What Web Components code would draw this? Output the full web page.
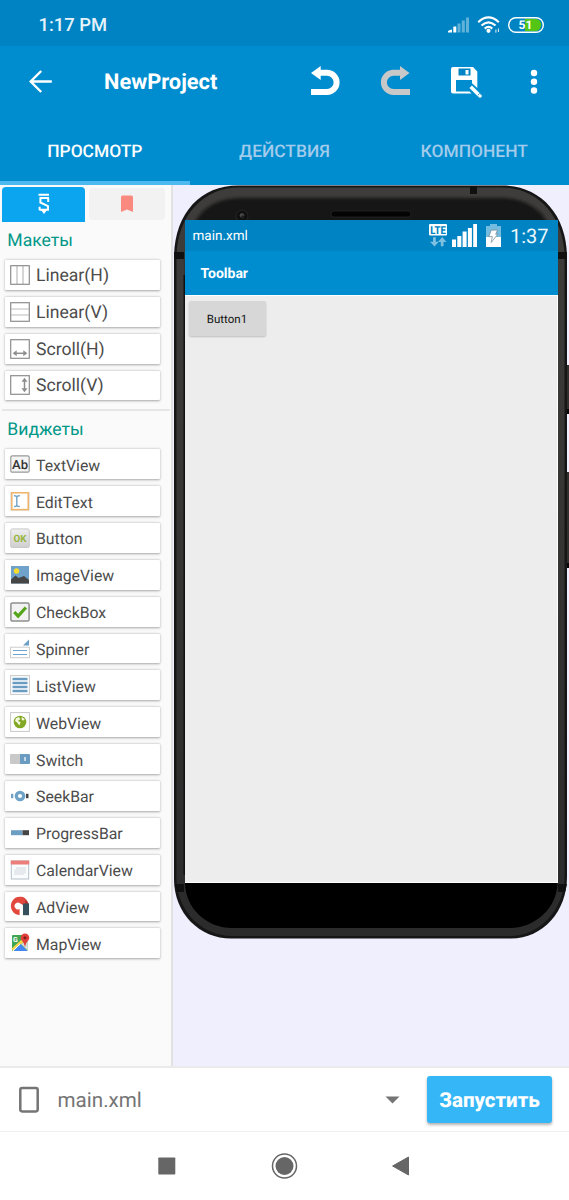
<!DOCTYPE html>
<html lang="ru">
<head>
<meta charset="utf-8">
<title>NewProject</title>
<style>
  body {
    margin: 0;
    font-family: Roboto, sans-serif;
    text-rendering: geometricPrecision;
    background: #fff;
  }
</style>
</head>
<body>
<editor-screen></editor-screen>

<script>
const ICONS = {
  // status bar
  signal: [22, 16, `<path d="M0 15.500v-1.500q2-1.500 4-1.500v3z" fill="#fff"/><rect x="5.300" y="9.500" width="3" height="6" fill="#fff"/><g fill="#fff" opacity=".38"><rect x="9.500" y="6.500" width="3" height="9"/><rect x="13.800" y="3.500" width="3" height="12"/><rect x="18" y="0.500" width="3" height="15"/></g>`],
  wifi: [24, 18, `<g fill="none" stroke="#fff" stroke-width="2.100"><path d="M.2 6.200Q10.500 -3.300 20.800 6.200"/><path d="M3.500 9.600Q10.500 3 17.500 9.600"/><path d="M6.700 12.600Q10.500 9.300 14.300 12.600"/></g><circle cx="10.500" cy="14.800" r="2.100" fill="#fff"/><path d="M17.900 13.500v3.200M20.400 12.500v3.500" stroke="#fff" stroke-width=".9"/>`],
  battery: [38, 18, `<path d="M18 2.800h10a5.700 5.700 0 0 1 0 12.400H18z" fill="#54c515"/><rect x="1.700" y="1.700" width="34.600" height="14.600" rx="7.300" fill="none" stroke="#fff" stroke-width="1.400"/><text x="18.500" y="13.300" font-size="12" font-weight="700" text-anchor="middle" fill="#fff">51</text>`],
  // app bar
  back: [24, 24, `<path d="M23.800 11.500H3.500M13.200 1 2.700 11.500l10.500 10.500" fill="none" stroke="#fff" stroke-width="2.400"/>`],
  undo: [32, 32, `<path d="M2 7 11.700 0v3.800H18a12.600 12.600 0 0 1 0 25.200H2v-6h16a6.500 6.500 0 0 0 0-13.200h-6.300V14z" fill="#fff"/>`],
  redo: [32, 32, `<path d="M30.500 7 21 0v3.800H14.500a12.600 12.600 0 0 0 0 25.200H31v-6H14.500a6.500 6.500 0 0 1 0-13.200H21V14z" fill="#c8c8c8"/>`],
  save: [34, 32, `<path d="M4 1h20l4.300 4.500v16.500L23 17.300V14H7v11.500h13.500l2 2H4q-2 0-2-2V3q0-2 2-2z" fill="#fff"/><path d="M9.500 2.500h12V9.500h-12z" fill="#0084c3"/><rect x="16.500" y="4" width="3" height="4.500" fill="#fff"/><path d="M21.700 20.700 30.200 29.200" stroke="#fff" stroke-width="3.500"/><circle cx="31" cy="30" r="1.800" fill="#fff"/><path d="m28.700 29.300 2-2" stroke="#008ecf" stroke-width=".8"/>`],
  more: [12, 26, `<g fill="#fff"><circle cx="6" cy="4" r="3.200"/><circle cx="6" cy="12.700" r="3.200"/><circle cx="6" cy="21.500" r="3.200"/></g>`],
  // palette tabs
  brand: [14, 22, `<g fill="none" stroke="#fff" stroke-width="2"><path d="M1.500 1.700h10.500M12 5H3.400v4.500l7.600 3.700v3.600H2.300M2.600 13.700v3.200M11.200 5v4"/></g><path d="M3.800 16.800h6.400L7 21z" fill="#fff"/>`],
  bookmark: [12, 18, `<path d="M0 2q0-1.500 1.500-1.500h9q1.500 0 1.500 1.500v15l-6-2.600-6 2.600z" fill="#fa8a80"/>`],
  // layouts
  linearH: [20, 20, `<path d="M7 1v18M13 1v18" stroke="#bbb" stroke-width="1.200"/><rect x=".7" y=".7" width="18.600" height="18.600" fill="none" stroke="#8d8d8d" stroke-width="1.200"/>`],
  linearV: [20, 20, `<path d="M1 7h18M1 13h18" stroke="#bbb" stroke-width="1.200"/><rect x=".7" y=".7" width="18.600" height="18.600" fill="none" stroke="#8d8d8d" stroke-width="1.200"/>`],
  scrollH: [20, 20, `<rect x=".7" y=".7" width="18.600" height="18.600" fill="none" stroke="#8d8d8d" stroke-width="1.200"/><path d="M5 14.300h10" stroke="#8d8d8d" stroke-width="1.500"/><path d="M6.700 11.300 2.700 14.300l4 3zM13.300 11.300l4 3-4 3z" fill="#8d8d8d"/>`],
  scrollV: [20, 20, `<rect x=".7" y=".7" width="18.600" height="18.600" fill="none" stroke="#8d8d8d" stroke-width="1.200"/><path d="M14.500 5v10" stroke="#8d8d8d" stroke-width="1.500"/><path d="m11.500 6.700 3-4 3 4zM11.500 13.300l3 4 3-4z" fill="#8d8d8d"/>`],
  // widgets
  text: [20, 20, `<rect x=".8" y="1.800" width="18.400" height="16.400" rx="1.500" fill="#f4f4f4" stroke="#999" stroke-width="1.200"/><text x="10" y="14.500" font-size="12.500" font-weight="500" text-anchor="middle" fill="#333" textLength="16" lengthAdjust="spacingAndGlyphs">Ab</text>`],
  edit: [20, 20, `<rect x=".5" y="1" width="19" height="18.500" fill="#ccc"/><rect x="1.800" y="1.800" width="16.400" height="16.800" fill="#fff" stroke="#f0b469" stroke-width="1.500"/><path d="M4 4.800q2.800-.3 2.800 1.500v7.500q0 1.900-2.800 1.600M9.800 4.800q-3-.3-3 1.500M6.800 13.800q0 1.900 3 1.600" fill="none" stroke="#70a3c7" stroke-width="1.400"/>`],
  ok: [20, 20, `<defs><linearGradient id="g" x2="0" y2="1"><stop stop-color="#eee"/><stop offset="1" stop-color="#cfcfcf"/></linearGradient></defs><rect x=".7" y=".9" width="18.600" height="18.600" rx="1.500" fill="url(#g)" stroke="#c9c9c9"/><text x="10" y="13.600" font-size="10" font-weight="700" text-anchor="middle" fill="#98b63c" textLength="13" lengthAdjust="spacingAndGlyphs">OK</text>`],
  image: [20, 20, `<rect x="1" y="1" width="18" height="17.500" fill="#6fa3cb"/><circle cx="6.500" cy="6" r="2.700" fill="#f9dc2c"/><path d="M1 14.500 5.500 10.500 8.500 13 14 11 19 15v3.500H1z" fill="#464646"/>`],
  check: [20, 20, `<rect x=".9" y=".9" width="18.200" height="18.200" rx="1.500" fill="#f2f2f2" stroke="#8f8f8f" stroke-width="1.500"/><path d="m4.300 10 3.800 4.100 7.800-8.600" fill="none" stroke="#55a51c" stroke-width="3.200"/>`],
  spinner: [20, 20, `<path d="M19 .5v6h-6z" fill="#6c9fc6"/><rect x=".6" y="8.200" width="18.800" height="10.500" fill="#fff" stroke="#ccc"/><path d="M3 11.500h14M3 15.500h14" stroke="#6fa3cb" stroke-width="1.200"/>`],
  list: [20, 20, `<rect x=".6" y=".6" width="18.800" height="18.800" fill="#fff" stroke="#c8c8c8"/><path d="M2.500 4h15M2.500 8h15M2.500 12h15M2.500 16h15" stroke="#6b9cc1" stroke-width="2.400"/>`],
  web: [20, 20, `<rect x=".6" y=".6" width="18.800" height="18.800" fill="#fff" stroke="#c8c8c8"/><circle cx="10" cy="10" r="6.300" fill="#83a826"/><path d="M6 6.200 9 5l1.300 2.200-2.300 1.500 2.600 1.700-1.300 3-2-2.600L5 9zM11.800 5l3 2.200-1.800 1.600-1.500-1.600z" fill="#f5f9de"/>`],
  switch: [20, 20, `<path d="M1 5h10v10H1q-1 0-1-1V6q0-1 1-1z" fill="#c9c9c9"/><path d="M10 5h9q1 0 1 1v8q0 1-1 1h-9z" fill="#6a9cc2"/><path d="M15 8v4" stroke="#e3edf4" stroke-width="1.500"/>`],
  seek: [20, 20, `<path d="M1 7.800h2.300v4.400H1z" fill="#70a2c7"/><circle cx="10" cy="10" r="3.700" fill="none" stroke="#6fa2c7" stroke-width="3.300"/><path d="M16 7.800h2.500v4.400H16z" fill="#444"/>`],
  progress: [20, 20, `<path d="M1 7.200h11.500v5H1z" fill="#6d9fc5"/><path d="M12.500 7.200H19v5h-6.500z" fill="#454545"/>`],
  calendar: [20, 20, `<rect x="1.300" y="1" width="17.400" height="18" fill="#fafbfc" stroke="#b5c0cb"/><path d="M.8.500h18.400v4H.8z" fill="#eb7d7b"/><path d="M6 7h10v6.500h-2v1.500H4V9.500h2z" fill="#e6eaee"/>`],
  ad: [20, 20, `<path d="M9 1.500q8 0 9.800 6.500v3h-5z" fill="#b7332d"/><path d="M10.200 7.500a3.400 3.400 0 1 0-.6 5.600v6A9.200 9.200 0 1 1 15.500 2.500l-1 7z" fill="#e2483e"/><path d="M13 7.500h6v11.700h-6z" fill="#36505e"/>`],
  map: [20, 20, `<rect x="2" y="2" width="15.500" height="16" rx="1" fill="#40a653"/><path d="M2.500 17 17 4" stroke="#f7d64a" stroke-width="3.300"/><path d="m11 11 6.500 6.500V8z" fill="#ddd"/><path d="m3.500 18 7-7 7 7z" fill="#4486f4"/><path d="M10 11.200 2.700 18" stroke="#fff"/><text x="3" y="8.500" font-size="7" font-weight="700" fill="#fff">G</text><path d="M15 14q-.5-4-3-6.200a4.300 4.300 0 1 1 6 0Q15.500 10 15 14z" fill="#e1403a"/><circle cx="15" cy="4.800" r="1.500" fill="#7c1e1c"/>`],
  // preview status bar
  lte: [18, 24, `<rect width="18" height="11.500" rx="1" fill="#fff"/><text x="9" y="9.700" font-size="11" font-weight="800" text-anchor="middle" fill="#0083c1" textLength="15.500" lengthAdjust="spacingAndGlyphs">LTE</text><path d="M5.500 22.500 1 17.700h3v-4.400h2.800v4.400h3zM13.200 13 17.500 18h-3v4.300h-2.700V18H9z" fill="#7fbfe0"/>`],
  bars: [25, 24, `<path d="M0 15.500h4V23H0zM5.300 12h4v11h-4zM10.600 7.500h4V23h-4zM15.900 4h4v19h-4zM21.200 0H25v23h-3.800z" fill="#fff"/>`],
  charge: [15, 24, `<path d="M4 0h7v2h4v11H0V2h4z" fill="#73bbdf"/><path d="M0 13h15v10H0z" fill="#fff"/><path d="m5.200 6.200 6.300-.2-1.800 4.200h2.200L5.200 18.500l1.200-5.800H2.800z" fill="#fff" stroke="#6e8792" stroke-width=".7"/>`],
  // bottom
  device: [22, 28, `<rect x="2.300" y="2" width="17.400" height="23.400" rx="1.800" fill="none" stroke="#757575" stroke-width="2.500"/>`],
  down: [14, 8, `<path d="M-.5 .5h14L6.500 7.500z" fill="#757575"/>`],
  recent: [18, 18, `<rect x=".3" y=".5" width="17" height="17" rx=".8" fill="#666"/>`],
  home: [28, 28, `<circle cx="14.500" cy="14" r="12" fill="none" stroke="#666" stroke-width="1.500"/><circle cx="14.500" cy="14" r="9" fill="#666"/>`],
  prev: [18, 20, `<path d="M.6 10 16.500 1v18z" fill="#666" stroke="#666" stroke-width="1" stroke-linejoin="round"/>`]
};

class UiIcon extends HTMLElement {
  connectedCallback() {
    const [w, h, body] = ICONS[this.getAttribute('name')];
    this.attachShadow({ mode: 'open' });
    this.shadowRoot.innerHTML = `
      <style>
        :host { display: block; flex: none; width: ${w}px; height: ${h}px; }
        svg { display: block; overflow: visible; font-family: Roboto, sans-serif; }
      </style>
      <svg width="${w}" height="${h}" viewBox="0 0 ${w} ${h}">${body}</svg>
    `;
  }
}

class StatusBar extends HTMLElement {
  connectedCallback() {
    this.attachShadow({ mode: 'open' });
    this.shadowRoot.innerHTML = `
      <style>
        :host {
          display: flex;
          align-items: center;
          box-sizing: border-box;
          height: 46px;
          padding: 3px 24px 0 38.5px;
          background: #0083c2;
          color: #e6f3fa;
        }
        .time { flex: 1; font-size: 18.4px; font-weight: 500; padding-top: 2px; }
        .icons { display: flex; align-items: center; gap: 7px; }
        .icons ui-icon:first-child { margin-right: 1px; }
      </style>
      <div class="time">1:17 PM</div>
      <div class="icons">
        <ui-icon name="signal"></ui-icon>
        <ui-icon name="wifi"></ui-icon>
        <ui-icon name="battery" style="margin-left:-2px"></ui-icon>
      </div>
    `;
  }
}

class AppBar extends HTMLElement {
  connectedCallback() {
    this.attachShadow({ mode: 'open' });
    this.shadowRoot.innerHTML = `
      <style>
        :host {
          display: flex;
          align-items: center;
          box-sizing: border-box;
          height: 71px;
          padding: 0 29px 0 28px;
          background: #008dcf;
          color: #fff;
        }
        .title { flex: 1; margin-left: 52px; font-size: 21.8px; font-weight: 700; padding-top: 2px; }
        .actions {
          display: grid;
          grid-template-columns: 70px 70px 79px 12px;
          align-items: center;
        }
      </style>
      <ui-icon name="back"></ui-icon>
      <div class="title"><slot></slot></div>
      <div class="actions">
        <ui-icon name="undo"></ui-icon>
        <ui-icon name="redo"></ui-icon>
        <ui-icon name="save"></ui-icon>
        <ui-icon name="more"></ui-icon>
      </div>
    `;
  }
}

class TabBar extends HTMLElement {
  connectedCallback() {
    this.attachShadow({ mode: 'open' });
    this.shadowRoot.innerHTML = `
      <style>
        :host {
          display: grid;
          grid-template-columns: repeat(3, 1fr);
          height: 68px;
          background: #008dcf;
        }
        ::slotted(*) {
          display: flex;
          align-items: center;
          justify-content: center;
          border-bottom: 4px solid transparent;
          padding-top: 6px;
          font-size: 17.4px;
          font-weight: 500;
          color: #a3cbeb;
        }
        ::slotted(.active) { color: #fff; border-bottom-color: #4db9ef; }
      </style>
      <slot></slot>
    `;
  }
}

class PaletteItem extends HTMLElement {
  connectedCallback() {
    this.attachShadow({ mode: 'open' });
    this.shadowRoot.innerHTML = `
      <style>
        :host {
          display: flex;
          align-items: center;
          gap: 6px;
          box-sizing: border-box;
          height: 29.85px;
          width: 155px;
          padding-left: 5px;
          background: #fff;
          border-radius: 1px;
          box-shadow: 0 .5px 2.5px rgba(0, 0, 0, .34);
          color: #4c4c4c;
          font-size: var(--item-size, 15.8px);
          white-space: nowrap;
        }
        span { padding-top: 2px; }
      </style>
      <ui-icon name="${this.getAttribute('icon')}"></ui-icon>
      <span><slot></slot></span>
    `;
  }
}

class PaletteGroup extends HTMLElement {
  connectedCallback() {
    this.attachShadow({ mode: 'open' });
    this.shadowRoot.innerHTML = `
      <style>
        :host { display: block; }
        .heading {
          height: 38px;
          box-sizing: border-box;
          padding: 7px 0 0 7.3px;
          font-size: 17.6px;
          line-height: 24px;
          color: #009788;
        }
        .items { display: flex; flex-direction: column; gap: 7px; padding-left: 5px; }
      </style>
      <div class="heading">${this.getAttribute('heading')}</div>
      <div class="items"><slot></slot></div>
    `;
  }
}

class WidgetPalette extends HTMLElement {
  connectedCallback() {
    this.attachShadow({ mode: 'open' });
    this.shadowRoot.innerHTML = `
      <style>
        :host {
          display: block;
          box-sizing: border-box;
          width: 173px;
          background: #fafafa;
          border-right: 2px solid #e2e2e2;
        }
        .tabs { display: flex; align-items: center; gap: 4px; height: 37px; padding-left: 2px; }
        .tab { display: flex; align-items: center; justify-content: center; }
        .on { width: 83px; height: 35px; margin-top: 1px; border-radius: 4px 4px 0 0; background: #0aa5ee; }
        .off { width: 76px; height: 32px; border-radius: 4px; background: #f2f2f2; }
        .layouts { --item-size: 17.6px; }
        hr { width: 168px; margin: 9px 0 0 2px; border: 0; height: 2px; background: #e6e6e6; }
      </style>
      <div class="tabs">
        <div class="tab on"><ui-icon name="brand"></ui-icon></div>
        <div class="tab off"><ui-icon name="bookmark"></ui-icon></div>
      </div>
      <palette-group class="layouts" heading="Макеты">
        <palette-item icon="linearH">Linear(H)</palette-item>
        <palette-item icon="linearV">Linear(V)</palette-item>
        <palette-item icon="scrollH">Scroll(H)</palette-item>
        <palette-item icon="scrollV">Scroll(V)</palette-item>
      </palette-group>
      <hr>
      <palette-group heading="Виджеты">
        <palette-item icon="text">TextView</palette-item>
        <palette-item icon="edit">EditText</palette-item>
        <palette-item icon="ok">Button</palette-item>
        <palette-item icon="image">ImageView</palette-item>
        <palette-item icon="check">CheckBox</palette-item>
        <palette-item icon="spinner">Spinner</palette-item>
        <palette-item icon="list">ListView</palette-item>
        <palette-item icon="web">WebView</palette-item>
        <palette-item icon="switch">Switch</palette-item>
        <palette-item icon="seek">SeekBar</palette-item>
        <palette-item icon="progress">ProgressBar</palette-item>
        <palette-item icon="calendar">CalendarView</palette-item>
        <palette-item icon="ad">AdView</palette-item>
        <palette-item icon="map">MapView</palette-item>
      </palette-group>
    `;
  }
}

class PhonePreview extends HTMLElement {
  connectedCallback() {
    this.attachShadow({ mode: 'open' });
    // frame and screen share one grid cell
    this.shadowRoot.innerHTML = `
      <style>
        :host { display: grid; width: 396px; height: 754px; }
        .frame, .screen { grid-area: 1 / 1; }
        .screen {
          display: flex;
          flex-direction: column;
          width: 372.5px;
          height: 663px;
          margin: 35px 0 0 12px;
          color: #fff;
        }
        .status {
          display: flex;
          align-items: center;
          height: 31px;
          padding: 0 9px 0 7.5px;
          background: #0083c2;
          font-size: 13.5px;
        }
        .status span { padding-top: 1px; }
        .status span:first-child { flex: 1; }
        .clock { font-size: 20px; margin-left: 8.5px; color: #eaf6fc; }
        .toolbar {
          display: flex;
          align-items: center;
          box-sizing: border-box;
          height: 44px;
          padding: 2px 0 0 15.5px;
          background: #008dcf;
          font-size: 14px;
          font-weight: 700;
        }
        .body { flex: 1; background: #ededed; border: solid #fff; border-width: 1px 1px 1px 0; padding: 5px 3.5px; }
        .button {
          display: flex;
          align-items: center;
          justify-content: center;
          width: 77px;
          height: 35px;
          border-radius: 2px;
          background: #d6d7d6;
          box-shadow: 0 1px 2px rgba(0, 0, 0, .2);
          color: #111;
          font-size: 11.5px;
        }
      </style>
      <svg class="frame" width="396" height="754" viewBox="0 0 396 754">
        <defs>
          <linearGradient id="rim" x2="0" y2="1">
            <stop stop-color="#3e3d3b"/>
            <stop offset="1" stop-color="#2b2b2b"/>
          </linearGradient>
          <filter id="soft"><feGaussianBlur stdDeviation="1.500"/></filter>
        </defs>
        <rect x="393" y="180" width="4" height="49" fill="#33312f"/>
        <rect x="393" y="224" width="4" height="5" fill="#080808"/>
        <rect x="393" y="287" width="4" height="96" fill="#33312f"/>
        <rect x="393" y="378" width="4" height="5" fill="#080808"/>
        <path d="M1 73C1 28 28 .5 65 .5H329C366 .5 394 28 394 73V692C394 726 370 753.500 338 753.500H58C27 753.500 1 729 1 694Z" fill="#161616"/>
        <path d="M3.500 73C3.500 31 30 2.500 66 2.500H328C364 2.500 391.500 31 391.500 73V692C391.500 724 367 751 337 751H59C29 751 3.500 726 3.500 693Z" fill="url(#rim)"/>
        <path d="M13 80C13 35 32 13 67 13H328C363 13 383 35 383 75V110H13Z" fill="#151515" filter="url(#soft)"/>
        <path d="M10.500 690V90h2v600zM383 690V90h1v600z" fill="#111"/>
        <path d="M12 698H384.500C384 724 361 743 337 743H59C34 743 12.500 724 12 698Z" fill="#000"/>
        <path d="M1 67h10v7H1zM385 67h9v7h-9zM297 1h7v8h-7zM2 699h9v8H4zM385 699h9l-2 8h-7z" fill="#101010"/>
        <circle cx="69" cy="31" r="6" fill="#101010" stroke="#1f1f1f" stroke-width="1.500"/>
        <circle cx="69" cy="30.500" r="2.300" fill="#4c4c4c"/>
        <circle cx="69.500" cy="32" r="1.700" fill="#222"/>
        <rect x="158" y="26" width="80" height="6" rx="3" fill="#040404" stroke="#242424" stroke-width=".8"/>
      </svg>
      <div class="screen">
        <div class="status">
          <span>main.xml</span>
          <ui-icon name="lte"></ui-icon>
          <ui-icon name="bars" style="margin-left:5px"></ui-icon>
          <ui-icon name="charge" style="margin-left:9px"></ui-icon>
          <span class="clock">1:37</span>
        </div>
        <div class="toolbar">Toolbar</div>
        <div class="body"><div class="button">Button1</div></div>
      </div>
    `;
  }
}

class FileBar extends HTMLElement {
  connectedCallback() {
    this.attachShadow({ mode: 'open' });
    this.shadowRoot.innerHTML = `
      <style>
        :host {
          display: flex;
          align-items: center;
          box-sizing: border-box;
          height: 66px;
          padding: 0 17px 0 18px;
          border-top: 2px solid #ebebeb;
          border-bottom: 1px solid #efefef;
          background: #fff;
        }
        .file { flex: 1; margin-left: 17.5px; padding-top: 3px; font-size: 20.6px; color: #757575; }
        .run {
          display: flex;
          align-items: center;
          justify-content: center;
          width: 125px;
          height: 47px;
          margin-left: 27px;
          border-radius: 3px;
          background: #34b6f7;
          box-shadow: 0 2px 3px rgba(0, 0, 0, .3);
          color: #fff;
          font-size: 20.5px;
          font-weight: 800;
        }
        .run span { padding-top: 3px; }
      </style>
      <ui-icon name="device"></ui-icon>
      <div class="file">main.xml</div>
      <ui-icon name="down"></ui-icon>
      <div class="run"><span>Запустить</span></div>
    `;
  }
}

class NavBar extends HTMLElement {
  connectedCallback() {
    this.attachShadow({ mode: 'open' });
    this.shadowRoot.innerHTML = `
      <style>
        :host {
          display: flex;
          align-items: center;
          justify-content: space-between;
          height: 68px;
          padding: 0 159.500px 0 157.500px;
          background: #fff;
        }
      </style>
      <ui-icon name="recent"></ui-icon>
      <ui-icon name="home"></ui-icon>
      <ui-icon name="prev"></ui-icon>
    `;
  }
}

class EditorScreen extends HTMLElement {
  connectedCallback() {
    this.attachShadow({ mode: 'open' });
    this.shadowRoot.innerHTML = `
      <style>
        :host { display: flex; flex-direction: column; height: 1200px; overflow: hidden; }
        .workspace { flex: 1; display: flex; min-height: 0; background: #f0effe; }
        widget-palette { flex: none; }
      </style>
      <status-bar></status-bar>
      <app-bar>NewProject</app-bar>
      <tab-bar>
        <div class="active">ПРОСМОТР</div>
        <div>ДЕЙСТВИЯ</div>
        <div>КОМПОНЕНТ</div>
      </tab-bar>
      <div class="workspace">
        <widget-palette></widget-palette>
        <phone-preview></phone-preview>
      </div>
      <file-bar></file-bar>
      <nav-bar></nav-bar>
    `;
  }
}

customElements.define('ui-icon', UiIcon);
customElements.define('status-bar', StatusBar);
customElements.define('app-bar', AppBar);
customElements.define('tab-bar', TabBar);
customElements.define('palette-item', PaletteItem);
customElements.define('palette-group', PaletteGroup);
customElements.define('widget-palette', WidgetPalette);
customElements.define('phone-preview', PhonePreview);
customElements.define('file-bar', FileBar);
customElements.define('nav-bar', NavBar);
customElements.define('editor-screen', EditorScreen);
</script>
</body>
</html>
